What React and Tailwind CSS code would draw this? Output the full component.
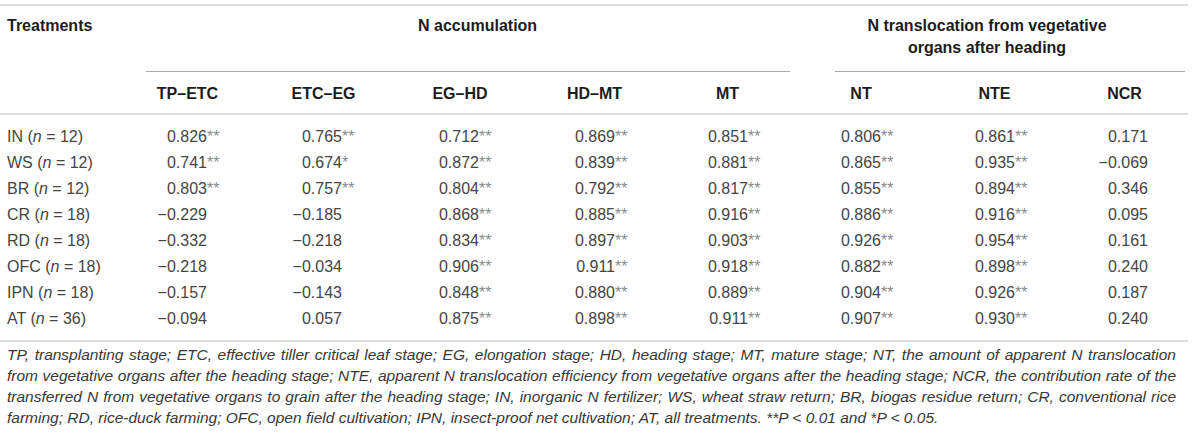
import React from "react";

const cols = "grid grid-cols-[120px_135px_137px_136px_133px_133px_134px_133px_127px]";

const rows = [
  ["IN", "12", ["0.826", "**"], ["0.765", "**"], ["0.712", "**"], ["0.869", "**"], ["0.851", "**"], ["0.806", "**"], ["0.861", "**"], ["0.171", ""]],
  ["WS", "12", ["0.741", "**"], ["0.674", "*"], ["0.872", "**"], ["0.839", "**"], ["0.881", "**"], ["0.865", "**"], ["0.935", "**"], ["\u22120.069", ""]],
  ["BR", "12", ["0.803", "**"], ["0.757", "**"], ["0.804", "**"], ["0.792", "**"], ["0.817", "**"], ["0.855", "**"], ["0.894", "**"], ["0.346", ""]],
  ["CR", "18", ["\u22120.229", ""], ["\u22120.185", ""], ["0.868", "**"], ["0.885", "**"], ["0.916", "**"], ["0.886", "**"], ["0.916", "**"], ["0.095", ""]],
  ["RD", "18", ["\u22120.332", ""], ["\u22120.218", ""], ["0.834", "**"], ["0.897", "**"], ["0.903", "**"], ["0.926", "**"], ["0.954", "**"], ["0.161", ""]],
  ["OFC", "18", ["\u22120.218", ""], ["\u22120.034", ""], ["0.906", "**"], ["0.911", "**"], ["0.918", "**"], ["0.882", "**"], ["0.898", "**"], ["0.240", ""]],
  ["IPN", "18", ["\u22120.157", ""], ["\u22120.143", ""], ["0.848", "**"], ["0.880", "**"], ["0.889", "**"], ["0.904", "**"], ["0.926", "**"], ["0.187", ""]],
  ["AT", "36", ["\u22120.094", ""], ["0.057", ""], ["0.875", "**"], ["0.898", "**"], ["0.911", "**"], ["0.907", "**"], ["0.930", "**"], ["0.240", ""]],
];

const subHeads = ["TP\u2013ETC", "ETC\u2013EG", "EG\u2013HD", "HD\u2013MT", "MT", "NT", "NTE", "NCR"];

const Cell = ({ value, stars }) => (
  <div className="flex items-center">
    <span className="w-[87px] text-right">{value}</span>
    <span className="text-[#8a8a8a]">{stars}</span>
  </div>
);

const App = () => {
  return (
    <div className="w-[1200px] h-[435px] bg-white pt-[4px] font-['Liberation_Sans',Arial,sans-serif] text-[16px] text-[#454545]">
      <div className="w-[1188px]">

        {/* header */}
        <div className="border-t-2 border-[#dcdcdc]">
          <div className={cols}>
            <div className="h-[66px] pl-[7px] pt-[9px] leading-[22px] font-bold text-[#1c1c1c]">Treatments</div>
            <div className="col-span-5 flex flex-col justify-between">
              <div className="pl-[298px] pt-[9px] leading-[22px] font-bold text-[#1c1c1c]">N accumulation</div>
              <div className="ml-[26px] mr-[4px] border-b border-[#a9a9a9]"></div>
            </div>
            <div className="col-span-3 flex flex-col justify-between">
              <div className="pr-[8px] pt-[9px] text-center leading-[22px] font-bold text-[#1c1c1c]">
                N translocation from vegetative
                <br />
                organs after heading
              </div>
              <div className="ml-[41px] mr-[3px] border-b border-[#a9a9a9]"></div>
            </div>
          </div>

          <div className={`${cols} h-[43px] items-center pt-[2px] border-b-2 border-[#dcdcdc]`}>
            <div></div>
            {subHeads.map((h) => (
              <div key={h} className="text-center font-bold text-[#1c1c1c]">{h}</div>
            ))}
          </div>
        </div>

        {/* body */}
        <div className="pt-[9px] pb-[8px] border-b-2 border-[#dcdcdc]">
          {rows.map((r) => (
            <div key={r[0]} className={`${cols} h-[26px] items-center`}>
              <div className="pl-[7px] whitespace-nowrap">
                {r[0]} (<i>n</i> = {r[1]})
              </div>
              {r.slice(2).map((c, i) => (
                <Cell key={i} value={c[0]} stars={c[1]} />
              ))}
            </div>
          ))}
        </div>

        {/* footnote */}
        <div className="pl-[7px] pr-[12px] pt-[2px] italic text-[15.5px] leading-[21px] text-[#383838]">
          <div className="text-justify [text-align-last:justify]">
            TP, transplanting stage; ETC, effective tiller critical leaf stage; EG, elongation stage; HD, heading stage; MT, mature stage; NT, the amount of apparent N translocation
          </div>
          <div className="text-justify [text-align-last:justify]">
            from vegetative organs after the heading stage; NTE, apparent N translocation efficiency from vegetative organs after the heading stage; NCR, the contribution rate of the
          </div>
          <div className="text-justify [text-align-last:justify]">
            transferred N from vegetative organs to grain after the heading stage; IN, inorganic N fertilizer; WS, wheat straw return; BR, biogas residue return; CR, conventional rice
          </div>
          <div>
            farming; RD, rice-duck farming; OFC, open field cultivation; IPN, insect-proof net cultivation; AT, all treatments. **<i>P</i> &lt; 0.01 and *<i>P</i> &lt; 0.05.
          </div>
        </div>

      </div>
    </div>
  );
};

export default App;
